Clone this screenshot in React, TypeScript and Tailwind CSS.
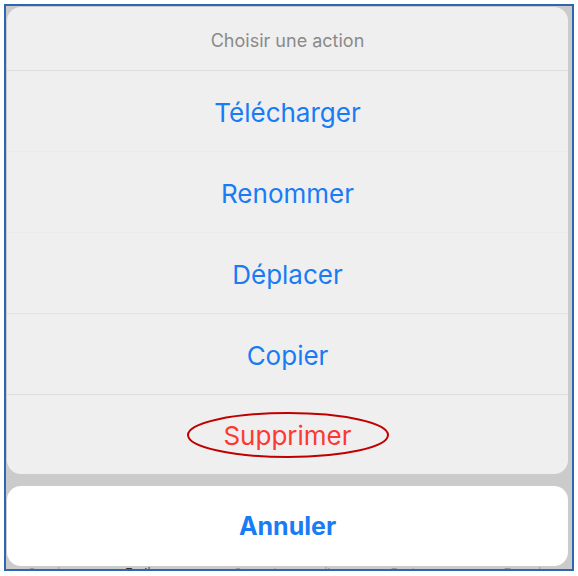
import React from 'react';

const actions = [
  { label: 'Télécharger', line: 'border-[#eaeaea]' },
  { label: 'Renommer', line: 'border-[#eaeaea]' },
  { label: 'Déplacer', line: 'border-[#e2e2e2]' },
  { label: 'Copier', line: 'border-[#dedede]' },
];

export default function App() {
  return (
    <div className="w-[578px] h-[576px] bg-white pt-[4px] pl-[4px]" style={{ fontFamily: 'Inter, Roboto, "Liberation Sans", sans-serif' }}>
      <div className="w-[570px] h-[567px] border-2 border-[#2f65b1] bg-[#cbcbcb] flex flex-col pt-[1px] pl-[1px] pr-[4px] overflow-hidden">
        {/* action group */}
        <div className="h-[468px] bg-[#efefef] rounded-[14px] flex flex-col overflow-hidden">
          <div className="h-[64px] flex items-center justify-center pt-[3px] text-[18px] text-[#8a8a8a] border-b border-[#dedede]">
            Choisir une action
          </div>
          {actions.map((a) => (
            <div key={a.label} className={`h-[81px] flex items-center justify-center pt-[2px] text-[26px] text-[#1a7cf4] border-b ${a.line}`}>
              {a.label}
            </div>
          ))}
          <div className="relative flex-1 flex items-center justify-center pt-[2px] text-[26px] text-[#fb3a30]">
            Supprimer
            <svg className="absolute left-1/2 top-1/2 -translate-x-1/2 -translate-y-1/2" width="206" height="50" viewBox="0 0 206 50">
              <ellipse cx="103" cy="25" rx="100" ry="22" fill="none" stroke="#c00000" strokeWidth="2" />
            </svg>
          </div>
        </div>

        {/* cancel */}
        <div className="mt-[12px] h-[80px] shrink-0 bg-white rounded-[14px] flex items-center justify-center pt-[2px] text-[25px] font-bold text-[#1a7cf4]">
          Annuler
        </div>

        {/* tab bar peeking underneath */}
        <div className="h-[3px] overflow-hidden flex items-start text-[13px] leading-[14px] text-[#9a9a9a] px-[20px] gap-[60px]">
          <span>Ouvrir</span>
          <span className="text-[#333]">En ligne</span>
          <span>Sur cet appareil</span>
          <span>Partage</span>
          <span className="ml-auto">Favoris</span>
        </div>
      </div>
    </div>
  );
}
